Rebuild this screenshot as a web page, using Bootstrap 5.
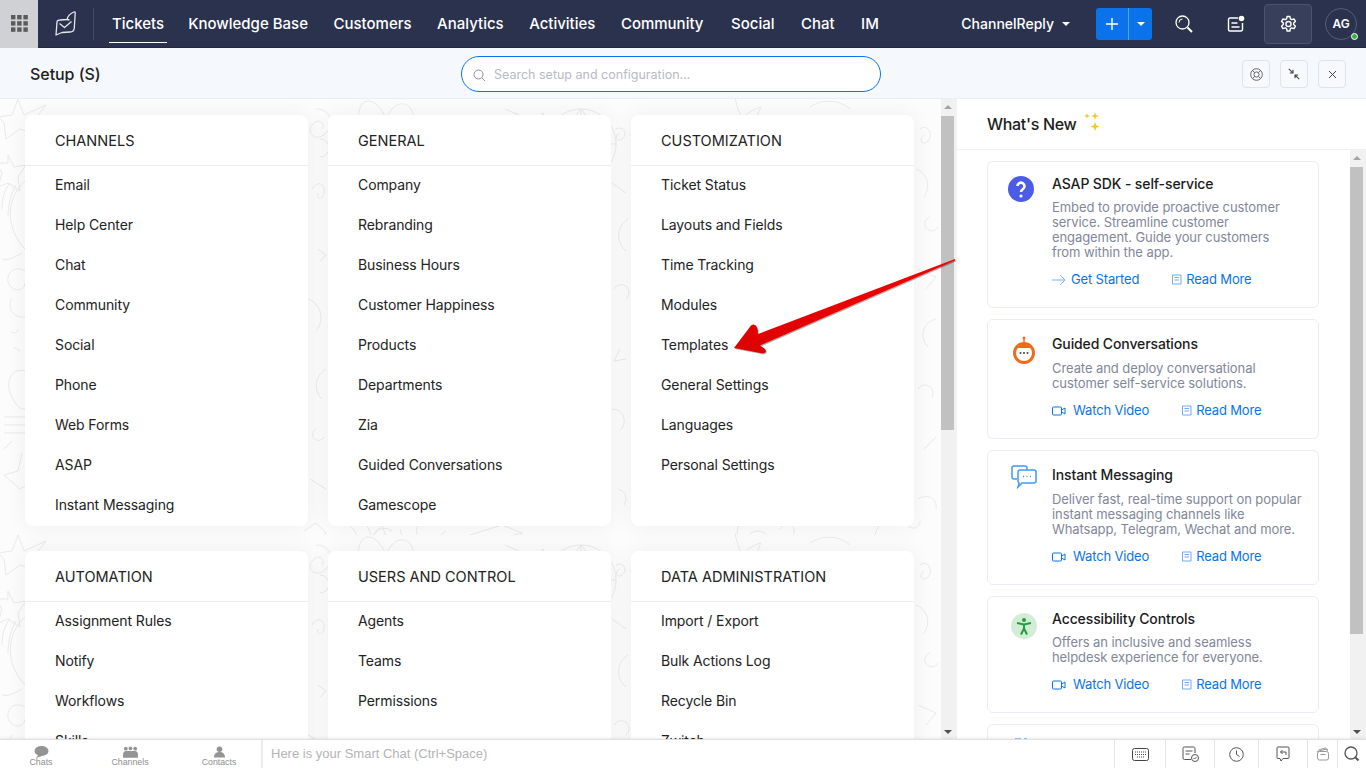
<!DOCTYPE html>
<html lang="en">
<head>
<meta charset="utf-8">
<title>Setup</title>
<link href="https://cdn.jsdelivr.net/npm/bootstrap@5.3.0/dist/css/bootstrap.min.css" rel="stylesheet">
<style>
html,body{height:100%;overflow:hidden}
body{font-family:Inter,"Noto Sans",sans-serif;font-size:14px;color:#1e1e1e;background:#fff}
.shell{height:768px}
.topbar{height:48px;background:#2b324d;color:#fff;border-bottom:1px solid #24293f}
.appgrid{width:38px;height:48px;background:#d0d1d5}
.logo-cell{width:56px;height:32px;border-right:1px solid #444b66}
.tabs{margin-left:15px;align-self:flex-start}
.tab-link{color:#fff;font-size:15px;font-weight:500;text-decoration:none;height:43px;line-height:47px;padding:0 3px;margin-right:19.5px}
.tab-link.on{border-bottom:1px solid #fff;margin-right:18px}
.tab-link.extra1{margin-right:20.5px}
.tab-link.extra2{margin-right:21.5px}
.tab-link:hover{color:#fff}
.dept{font-size:14px;font-weight:500;margin-right:26px}
.caret-d{width:0;height:0;border-left:4px solid transparent;border-right:4px solid transparent;border-top:4px solid #fff}
.addbtn{width:56px;height:32px;border-radius:3px;background:#0a73eb;margin-right:16px}
.addbtn>span:first-child{width:33px;border-right:1px solid #5da1f2;height:32px}
.addbtn>span:last-child{flex:1}
.top-ic{width:32px}
.top-ic+.top-ic{margin-left:20px}
.gear-box{width:48px;height:40px;border:1px solid #4c536d;background:#383f5a;border-radius:4px;margin:0 13px 0 12px}
.avatar-c{width:32px;height:32px;border:1px solid #555c76;border-radius:50%;font-size:12px;font-weight:600;margin-right:9px}
.avatar-c i{position:absolute;right:-2px;bottom:-1px;width:7px;height:7px;background:#2fb344;border:1px solid #fff;border-radius:50%}
.setupbar{height:51px;background:#f5f8fc;border-bottom:1px solid #e9eef4;padding:2px 20px 0 30px}
.setup-title{font-size:16px;font-weight:500;width:431px;letter-spacing:-.05px}
.searchbox{width:420px;height:36px;border:1px solid #0a73eb;border-radius:18px;background:#fff;padding:2px 0 0 11px;color:#b6bac4;font-size:12.5px;gap:8px}
.sq-btn{width:28px;height:28px;border:1px solid #dfe4ec;border-radius:4px;background:#f7f9fc;margin-left:10px}
.workarea{min-height:0;flex:1;position:relative}
.canvas{width:941px;padding:16px 0 0 25px;background-color:#fcfcfc;background-image:url("data:image/svg+xml,%3Csvg xmlns='http://www.w3.org/2000/svg' xmlns:xlink='http://www.w3.org/1999/xlink' width='941' height='436' fill='none' stroke='%23e9e9e9' stroke-width='1'%3E%3Cg id='t'%3E%3Cpath d='M18 0l6 16 22-10-14 18 6 12-18-6-14 10-2-16L-2 18l14-2z'/%3E%3Cpath d='M8 56l6 12 12-2-8 12 2 14-12-8-10 4 4-14-6-10 12 0z'/%3E%3Cpath d='M25 82C5 100 6 130 25 150M2 110c0-12 3-20 8-26M8 118c0-12 3-24 8-32'/%3E%3Cpath d='M2 160c8 2 16-4 20-6M25 172c-14-8-22 8-14 16 6 6 14 2 14-4M12 200c-6 8 2 20 13 18M10 232c4 4 8 2 8-2M14 248l6 4M25 272c-14-4-20 12-14 24s8 14 14 14'/%3E%3Cpath d='M4 318h21M4 326h21M4 334h21'/%3E%3Cpath d='M4 350l8-8M22 354l-4 18-14 4 16 14 10-6'/%3E%3Cpath d='M320 40a9 9 0 1 1 0 18M312 90c6-10 14-4 12 4s-8 6-6 0M318 150l8 6-6 6M308 200c12 4 18 20 8 32M326 270c-10 6-14 20-4 30M316 330a6 6 0 1 0 8 8M310 380l16 10'/%3E%3Cpath d='M616 30c8-4 12 6 6 10s-8-4-2-6M612 84l14 10M628 120c-10 6-14 22-2 32M614 190a8 8 0 1 1 12 10M620 250l-6 12 12-2M612 310c12 0 16 14 8 22M618 390c8 2 10 10 6 16'/%3E%3Cpath d='M920 30c8-6 14 6 8 12s-10-2-4-6M916 70c10 4 16 16 8 28M930 118a7 7 0 1 0 8 10M918 170l18 8-10 12M936 220c-12 2-18 18-8 28M918 290a8 8 0 1 1 14 8M924 350l12-12M918 400c10-6 20 0 18 10'/%3E%3Cpath d='M316 10c14 0 20 14 10 24s-20 0-14-8 14-2 10 4M360 34c-8-40 16-40 26-14 10-26 34-16 26 10M505 10l32 14 6-10 10 22M552 0'/%3E%3Cpath d='M581 10a35 35 0 1 0 .1 0zM546 45h70M581 10v70M581 10c-14 14-14 56 0 70M581 10c14 14 14 56 0 70'/%3E%3Cpath d='M640 16l6 12-16 8M735 -2c2 12 6 20 8 22 4-6 10-10 18-12-4 6-4 14-4 22M675 24c8 6 14 6 22 2M690 30l4-12 6 10'/%3E%3Cpath d='M810 8c12-8 28-8 40 2'/%3E%3C/g%3E%3Cg stroke-width='1'%3E%3Cpath d='M304 432l12-8 10 10-6 6M346 422c10 10 20 24 4 32M366 424l6 14 10-12 6 18M392 432a12 12 0 1 0 2 16M400 430c4 18 14 24 18 24s8-8 0-10M436 440l10-8M470 436l32-10 20 8v30l-32 6-20-8zM470 436l20 6 32-8M490 442v28M514 452a3 3 0 1 0 .1 0M524 452a3 3 0 1 0 .1 0M534 450a3 3 0 1 0 .1 0M700 440a14 14 0 1 0 .1 0M742 420c-8 10-6 30 6 38M758 432a12 12 0 1 0 .1 0M780 430c6-8 12-8 14 0s-8 14-4 20M850 444c6-6 14-4 14 4M884 420c-10 10-14 28-4 36M906 424c4 8 14 6 14-2'/%3E%3Cpath d='M316 440c-8 0-12 8-8 14M420 424c-6 6-4 16 4 16'/%3E%3C/g%3E%3Cuse xlink:href='%23t' y='436'/%3E%3C/svg%3E")}
.scroll-v{width:16px;background:#f1f1f1;position:relative;flex-shrink:0}
.scroll-v .thumb{position:absolute;left:0;right:3px;background:#c1c1c1;top:17px}
.thumb-left{height:314px}
.thumb-right{height:467px}
.scroll-v .up,.scroll-v .dn{position:absolute;left:3px;width:0;height:0;border-left:4px solid transparent;border-right:4px solid transparent}
.scroll-v .up{top:6px;border-bottom:4px solid #a3a3a3}
.scroll-v .dn{bottom:5px;border-top:4px solid #505050}
.panel-grid{display:grid;grid-template-columns:283px 283px 283px;column-gap:20px;row-gap:25px}
.menu-card{background:#fff;border-radius:8px 8px 0 0;padding-bottom:1px;box-shadow:0 0 22px rgba(0,0,0,.06)}
.menu-card.closed{border-radius:8px}
.menu-head{height:51px;line-height:51px;padding-left:30px;border-bottom:1px solid #e9ecf2;font-size:14.5px;color:#222;margin-bottom:-1px}
.menu-item{height:40px;line-height:40px;padding-left:30px;font-size:14px;color:#222;letter-spacing:-.1px}
.whatsnew{flex:1;background:#fff;min-width:0}
.wn-head{height:51px;border-bottom:1px solid #eceff3;padding-left:30px;font-size:16px;font-weight:500;color:#1c1c1c;letter-spacing:-.3px}
.spark{margin:0 0 5px 4px}
.wn-body{flex:1;min-height:0;overflow:hidden;position:relative}
.wn-list{flex:1;padding:11px 0 0 30px;gap:11px;min-width:0;overflow:hidden}
.wn-card{width:332px;border:1px solid #e8edf4;border-radius:6px;padding:12px 0 18px 20px;flex:none}
.wn-ic{width:44px;flex:none;padding-top:0}
.ic-q{margin-top:2px}
.ic-r{margin:2px 0 0 5px}
.ic-m{margin-left:3px}
.ic-a{margin:4px 0 0 3px}
.wn-title{font-size:14px;font-weight:500;color:#1b1b1b;line-height:20px;letter-spacing:-.12px}
.wn-desc{font-size:13px;line-height:15px;color:#81879a;margin-top:6px;width:251px;letter-spacing:-.08px}
.wn-card.roomy{padding-top:14px}
.wn-card.roomy .wn-desc{margin-top:7px}
.wn-acts{margin-top:10px;font-size:13px;line-height:19px;color:#0a73eb;gap:32px;letter-spacing:-.15px}
.wn-acts>span{gap:4px}
.wn-acts>span.gs{gap:5px}
.wn-acts>span.vid{gap:7px}
.stub-card{height:60px}
.bottombar{height:29px;background:#fff;border-top:1px solid #dfdfdf;box-shadow:0 -1px 3px rgba(0,0,0,.08);position:relative;z-index:2;flex:none}
.bb-tabs{width:261px;gap:7px}
.bb-tab{width:82px;font-size:8.8px;color:#8e8e8e;line-height:9px;padding-top:6px;font-family:"Liberation Sans",sans-serif}
.bb-chat{flex:1;border-left:2px solid #ececec;padding-left:8px;font-size:13px;color:#b4b4b4;height:28px;font-family:"Liberation Sans",sans-serif}
.bb-cell{height:28px;border-left:1px solid #e4e4e4}
.w51{width:51px}.w49{width:49px}.w44{width:44px}.w30{width:30px}.w29{width:29px}
.arrow-over{position:absolute;left:0;top:0;pointer-events:none;filter:drop-shadow(1px 1px .6px rgba(0,0,0,.3))}
</style>
</head>
<body>
<div class="shell d-flex flex-column">
  <header class="topbar d-flex align-items-center flex-shrink-0">
    <div class="appgrid d-flex align-items-center justify-content-center">
      <svg width="17" height="17" viewBox="0 0 17 17" fill="#5a5a5a"><rect x="0" y="0" width="4.400" height="4.400"/><rect x="6.200" y="0" width="4.400" height="4.400"/><rect x="12.400" y="0" width="4.400" height="4.400"/><rect x="0" y="6.200" width="4.400" height="4.400"/><rect x="6.200" y="6.200" width="4.400" height="4.400"/><rect x="12.400" y="6.200" width="4.400" height="4.400"/><rect x="0" y="12.400" width="4.400" height="4.400"/><rect x="6.200" y="12.400" width="4.400" height="4.400"/><rect x="12.400" y="12.400" width="4.400" height="4.400"/></svg>
    </div>
    <div class="logo-cell d-flex align-items-center justify-content-center">
      <svg width="21" height="25" viewBox="0 0 21 25" fill="none" stroke="#e6e8ee" stroke-width="1.300" stroke-linejoin="round"><path d="M1 24L2 11Q2.300 9 5 9L12 8.500Q13 3.500 19 1Q20.300 .6 20.200 2L19.300 17Q19 21 15 21L7 21.500Z"/><path d="M4.500 12.500L9.500 16.500L16.500 10.500"/><path d="M12 8.500L14.500 9"/></svg>
    </div>
    <nav class="tabs d-flex align-items-center">
      <a class="tab-link on">Tickets</a><a class="tab-link">Knowledge Base</a><a class="tab-link">Customers</a><a class="tab-link">Analytics</a><a class="tab-link">Activities</a><a class="tab-link extra2">Community</a><a class="tab-link extra1">Social</a><a class="tab-link extra1">Chat</a><a class="tab-link">IM</a>
    </nav>
    <div class="ms-auto d-flex align-items-center">
      <div class="dept d-flex align-items-center gap-2">ChannelReply <span class="caret-d"></span></div>
      <div class="addbtn d-flex align-items-center">
        <span class="d-flex align-items-center justify-content-center"><svg width="12" height="12" viewBox="0 0 12 12" stroke="#fff" stroke-width="1.400"><path d="M6 0v12M0 6h12"/></svg></span>
        <span class="d-flex align-items-center justify-content-center"><span class="caret-d"></span></span>
      </div>
      <span class="top-ic d-flex justify-content-center"><svg width="18" height="18" viewBox="0 0 18 18" fill="none" stroke="#fff" stroke-width="1.300"><circle cx="7.500" cy="7.500" r="6.500"/><path d="M12.500 12.500l4.500 4.500" stroke-width="2"/><path d="M4 7.500a3.500 3.500 0 0 1 3.500-3.500" stroke-width="1"/></svg></span>
      <span class="top-ic d-flex justify-content-center"><svg width="18" height="18" viewBox="0 0 18 18" fill="none" stroke="#fff" stroke-width="1.400"><path d="M11 3H3a1.500 1.500 0 0 0-1.500 1.500v10A1.500 1.500 0 0 0 3 16h11a1.500 1.500 0 0 0 1.500-1.500V8"/><path d="M4.500 8h6M4.500 12h8"/><circle cx="14.500" cy="3.500" r="2.800" fill="#fff" stroke="none"/></svg></span>
      <span class="gear-box d-flex align-items-center justify-content-center"><svg width="17" height="18" viewBox="0 0 24 24" fill="none" stroke="#fff" stroke-width="2" stroke-linejoin="round"><circle cx="12" cy="12" r="3.600"/><path d="M10 1.500h4l.7 3.300 1.900 1.100 3.200-1 2 3.400-2.500 2.300v2.200l2.500 2.300-2 3.400-3.200-1-1.900 1.100-.7 3.300h-4l-.7-3.300-1.900-1.100-3.200 1-2-3.400 2.500-2.300v-2.200L2.200 8.300l2-3.400 3.200 1 1.900-1.100z"/></svg></span>
      <span class="avatar-c d-flex align-items-center justify-content-center position-relative">AG<i></i></span>
    </div>
  </header>

  <div class="setupbar d-flex align-items-center flex-shrink-0">
    <div class="setup-title">Setup (S)</div>
    <div class="searchbox d-flex align-items-center">
      <svg width="13" height="13" viewBox="0 0 13 13" fill="none" stroke="#8a8f9c"><circle cx="5.500" cy="5.500" r="4.500"/><path d="M9 9l3 3"/></svg>
      <span>Search setup and configuration...</span>
    </div>
    <div class="ms-auto d-flex">
      <span class="sq-btn d-flex align-items-center justify-content-center"><svg width="13" height="13" viewBox="0 0 13 13" fill="none" stroke="#666"><circle cx="6.500" cy="6.500" r="5.800"/><circle cx="6.500" cy="6.500" r="2.600"/><path d="M2.400 2.400l2.200 2.200M10.600 2.400L8.400 4.600M2.400 10.600l2.200-2.200M10.600 10.600L8.400 8.400"/></svg></span>
      <span class="sq-btn d-flex align-items-center justify-content-center"><svg width="12" height="12" viewBox="0 0 12 12" fill="none" stroke="#444" stroke-width="1.100"><path d="M.8.8l4 4M5 1.800V5H1.800M11.200 11.200l-4-4M7 10.200V7h3.200"/></svg></span>
      <span class="sq-btn d-flex align-items-center justify-content-center"><svg width="9" height="9" viewBox="0 0 9 9" stroke="#444" stroke-width="1"><path d="M1 1l7 7M8 1L1 8"/></svg></span>
    </div>
  </div>

  <main class="workarea d-flex">
    <div class="canvas overflow-hidden">
      <div class="panel-grid">
        <section class="menu-card closed"><div class="menu-head">CHANNELS</div><div class="menu-item">Email</div><div class="menu-item">Help Center</div><div class="menu-item">Chat</div><div class="menu-item">Community</div><div class="menu-item">Social</div><div class="menu-item">Phone</div><div class="menu-item">Web Forms</div><div class="menu-item">ASAP</div><div class="menu-item">Instant Messaging</div></section>
        <section class="menu-card closed"><div class="menu-head">GENERAL</div><div class="menu-item">Company</div><div class="menu-item">Rebranding</div><div class="menu-item">Business Hours</div><div class="menu-item">Customer Happiness</div><div class="menu-item">Products</div><div class="menu-item">Departments</div><div class="menu-item">Zia</div><div class="menu-item">Guided Conversations</div><div class="menu-item">Gamescope</div></section>
        <section class="menu-card closed"><div class="menu-head">CUSTOMIZATION</div><div class="menu-item">Ticket Status</div><div class="menu-item">Layouts and Fields</div><div class="menu-item">Time Tracking</div><div class="menu-item">Modules</div><div class="menu-item">Templates</div><div class="menu-item">General Settings</div><div class="menu-item">Languages</div><div class="menu-item">Personal Settings</div></section>
        <section class="menu-card"><div class="menu-head">AUTOMATION</div><div class="menu-item">Assignment Rules</div><div class="menu-item">Notify</div><div class="menu-item">Workflows</div><div class="menu-item">Skills</div></section>
        <section class="menu-card"><div class="menu-head">USERS AND CONTROL</div><div class="menu-item">Agents</div><div class="menu-item">Teams</div><div class="menu-item">Permissions</div></section>
        <section class="menu-card"><div class="menu-head">DATA ADMINISTRATION</div><div class="menu-item">Import / Export</div><div class="menu-item">Bulk Actions Log</div><div class="menu-item">Recycle Bin</div><div class="menu-item">Zwitch</div></section>
      </div>
    </div>
    <div class="scroll-v"><span class="up"></span><span class="thumb thumb-left"></span><span class="dn"></span></div>
    <aside class="whatsnew d-flex flex-column">
      <div class="wn-head d-flex align-items-center flex-shrink-0">What's New
        <svg class="spark" width="20" height="20" viewBox="0 0 20 20" fill="#f2c832"><path d="M14 0l1 3 3 1-3 1-1 3-1-3-3-1 3-1zM6 1l.7 2L9 4l-2.300.7L6 7l-.7-2.300L3 4l2.300-1zM14 10l1.200 3.300 3.300 1.200-3.300 1.200L14 19l-1.200-3.300-3.300-1.200 3.300-1.200z"/></svg>
      </div>
      <div class="wn-body d-flex">
        <div class="wn-list d-flex flex-column">
          <article class="wn-card d-flex">
            <div class="wn-ic"><svg class="ic-q" width="26" height="26" viewBox="0 0 26 26"><circle cx="13" cy="13" r="13" fill="#4c5be8"/><path d="M9.500 10a3.500 3.500 0 1 1 5.500 3c-1.400 1-2 1.600-2 3" fill="none" stroke="#fff" stroke-width="2.600"/><circle cx="13" cy="20" r="1.600" fill="#fff"/></svg></div>
            <div><div class="wn-title">ASAP SDK - self-service</div><div class="wn-desc">Embed to provide proactive customer service. Streamline customer engagement. Guide your customers<br>from within the app.</div>
            <div class="wn-acts d-flex"><span class="gs d-flex align-items-center"><svg width="14" height="12" viewBox="0 0 14 12" fill="none" stroke="#7db4f3"><path d="M0 6h13M8 1l5 5-5 5"/></svg>Get Started</span><span class="d-flex align-items-center"><svg width="11" height="11" viewBox="0 0 11 11" fill="none" stroke="#6eabf1"><path d="M1.500 1h8.500v9H1.500zM3.500 3.500h4.500M3.500 6h4.500"/></svg>Read More</span></div></div>
          </article>
          <article class="wn-card roomy d-flex">
            <div class="wn-ic"><svg class="ic-r" width="26" height="30" viewBox="0 0 26 30"><circle cx="11" cy="2" r="1.500" fill="#f26a1b"/><path d="M11 3v4" stroke="#f26a1b" stroke-width="1.500"/><circle cx="11" cy="17" r="9.500" fill="none" stroke="#f26a1b" stroke-width="3"/><path d="M3 12a9 9 0 0 1 16 0z" fill="#f26a1b"/><circle cx="7.500" cy="17" r="1" fill="#444"/><circle cx="11" cy="17" r="1" fill="#444"/><circle cx="14.500" cy="17" r="1" fill="#444"/></svg></div>
            <div><div class="wn-title">Guided Conversations</div><div class="wn-desc">Create and deploy conversational customer self-service solutions.</div>
            <div class="wn-acts d-flex"><span class="vid d-flex align-items-center"><svg width="14" height="10" viewBox="0 0 14 10" fill="none" stroke="#0a73eb"><rect x=".5" y="1" width="9" height="8" rx="1"/><path d="M9.500 4l3.500-2v6l-3.500-2"/></svg>Watch Video</span><span class="d-flex align-items-center"><svg width="11" height="11" viewBox="0 0 11 11" fill="none" stroke="#6eabf1"><path d="M1.500 1h8.500v9H1.500zM3.500 3.500h4.500M3.500 6h4.500"/></svg>Read More</span></div></div>
          </article>
          <article class="wn-card roomy d-flex">
            <div class="wn-ic"><svg class="ic-m" width="26" height="24" viewBox="0 0 26 24" fill="none" stroke="#3f9bf5" stroke-width="1.500"><path d="M6 14H3a2 2 0 0 1-2-2V3a2 2 0 0 1 2-2h11a2 2 0 0 1 2 2v2"/><path d="M9 5h14a2 2 0 0 1 2 2v9a2 2 0 0 1-2 2H11l-4 4 1-4a2 2 0 0 1-1-2V7a2 2 0 0 1 2-2z" fill="#fff"/><path d="M12 11.500h1M15.500 11.500h1M19 11.500h1"/></svg></div>
            <div><div class="wn-title">Instant Messaging</div><div class="wn-desc">Deliver fast, real-time support on popular instant messaging channels like Whatsapp, Telegram, Wechat and more.</div>
            <div class="wn-acts d-flex"><span class="vid d-flex align-items-center"><svg width="14" height="10" viewBox="0 0 14 10" fill="none" stroke="#0a73eb"><rect x=".5" y="1" width="9" height="8" rx="1"/><path d="M9.500 4l3.500-2v6l-3.500-2"/></svg>Watch Video</span><span class="d-flex align-items-center"><svg width="11" height="11" viewBox="0 0 11 11" fill="none" stroke="#6eabf1"><path d="M1.500 1h8.500v9H1.500zM3.500 3.500h4.500M3.500 6h4.500"/></svg>Read More</span></div></div>
          </article>
          <article class="wn-card d-flex">
            <div class="wn-ic"><svg class="ic-a" width="26" height="26" viewBox="0 0 26 26"><circle cx="13" cy="13" r="13" fill="#d3ecd6"/><circle cx="13" cy="7" r="2" fill="#1ea03a"/><path d="M6 10l7 1.500 7-1.500M13 11.500v4M13 15.500l-3 6M13 15.500l3 6" fill="none" stroke="#1ea03a" stroke-width="2"/></svg></div>
            <div><div class="wn-title">Accessibility Controls</div><div class="wn-desc">Offers an inclusive and seamless helpdesk experience for everyone.</div>
            <div class="wn-acts d-flex"><span class="vid d-flex align-items-center"><svg width="14" height="10" viewBox="0 0 14 10" fill="none" stroke="#0a73eb"><rect x=".5" y="1" width="9" height="8" rx="1"/><path d="M9.500 4l3.500-2v6l-3.500-2"/></svg>Watch Video</span><span class="d-flex align-items-center"><svg width="11" height="11" viewBox="0 0 11 11" fill="none" stroke="#6eabf1"><path d="M1.500 1h8.500v9H1.500zM3.500 3.500h4.500M3.500 6h4.500"/></svg>Read More</span></div></div>
          </article>
          <article class="wn-card stub-card d-flex"><div class="wn-ic"><svg width="26" height="24" viewBox="0 0 26 24" fill="none" stroke="#2f8ff0" stroke-width="1.200"><path d="M7 2h6M16 2h3"/></svg></div></article>
        </div>
        <div class="scroll-v"><span class="up"></span><span class="thumb thumb-right"></span><span class="dn"></span></div>
      </div>
    </aside>
    <svg class="arrow-over" width="960" height="300" viewBox="0 98 960 300">
      <defs><linearGradient id="ag" x1="0" y1="0" x2="0" y2="1"><stop offset="0" stop-color="#f40000"/><stop offset="1" stop-color="#dc0202"/></linearGradient></defs>
      <path d="M955 258L758 333Q758 329 757 326.500Q755 322 751 324.500L734 347L763 352.500Q768 351.500 764.500 347.500L760 344.500L955 259.500Z" fill="url(#ag)"/>
    </svg>
  </main>

  <footer class="bottombar d-flex align-items-stretch">
    <div class="bb-tabs d-flex">
    <div class="bb-tab text-center"><svg width="16" height="12" viewBox="0 0 16 12" fill="#949494" class="d-block mx-auto"><ellipse cx="8.500" cy="5" rx="7" ry="5"/><path d="M3 12l3-4 3 2z"/></svg>Chats</div>
    <div class="bb-tab text-center"><svg width="15" height="12" viewBox="0 0 16 12" fill="#949494" class="d-block mx-auto"><circle cx="3" cy="2.500" r="2"/><circle cx="8" cy="2" r="2"/><circle cx="13" cy="2.500" r="2"/><path d="M0 9c0-3 2-4 3-4h10c1 0 3 1 3 4v3H0z"/></svg>Channels</div>
    <div class="bb-tab text-center"><svg width="13" height="12" viewBox="0 0 14 12" fill="#949494" class="d-block mx-auto"><circle cx="7" cy="3" r="3"/><path d="M1 12c0-4 2-6 6-6s6 2 6 6z"/></svg>Contacts</div>
    </div>
    <div class="bb-chat d-flex align-items-center">Here is your Smart Chat (Ctrl+Space)</div>
    <div class="d-flex ms-auto">
      <span class="bb-cell w51 d-flex align-items-center justify-content-center"><svg width="17" height="13" viewBox="0 0 17 13" fill="none" stroke="#444"><rect x=".5" y=".5" width="16" height="12" rx="2"/><path d="M3 4h11M3 6.500h11M5 9h7" stroke-dasharray="1 1"/></svg></span>
      <span class="bb-cell w49 d-flex align-items-center justify-content-center"><svg width="17" height="16" viewBox="0 0 17 16" fill="none" stroke="#555"><path d="M9 13.500H2.500a1.500 1.500 0 0 1-1.500-1.500V2.500A1.500 1.500 0 0 1 2.500 1h9A1.500 1.500 0 0 1 13 2.500V7"/><path d="M3.500 5h7M3.500 8h4"/><circle cx="13" cy="12" r="3.500"/><path d="M11.500 12l1 1 2-2"/></svg></span>
      <span class="bb-cell w44 d-flex align-items-center justify-content-center"><svg width="15" height="15" viewBox="0 0 15 15" fill="none" stroke="#555"><circle cx="7.500" cy="7.500" r="6.800"/><path d="M7.500 3.500v4l3 2"/></svg></span>
      <span class="bb-cell w49 d-flex align-items-center justify-content-center"><svg width="14" height="16" viewBox="0 0 14 16" fill="none" stroke="#555"><path d="M4 12.500H2a1 1 0 0 1-1-1V2a1 1 0 0 1 1-1h10a1 1 0 0 1 1 1v9.500a1 1 0 0 1-1 1H7l-2 2.500z"/><path d="M10 6H4.500M6.500 4l-2 2 2 2M10 6v3"/></svg></span>
      <span class="bb-cell w30 d-flex align-items-center justify-content-center"><svg width="14" height="14" viewBox="0 0 14 14" fill="none" stroke="#999"><path d="M1 4.500l9.500-2.500 1 2"/><path d="M2.500 3l7-2 2.500 2"/><rect x="1.500" y="4.500" width="11" height="8.500" rx="2"/><path d="M4.500 7.500h5"/></svg></span>
      <span class="bb-cell w29 d-flex align-items-center justify-content-center"><svg width="16" height="16" viewBox="0 0 16 16" fill="none" stroke="#555" stroke-width="1.300"><circle cx="7" cy="7" r="6"/><path d="M11.500 11.500l3 3" stroke-width="2"/></svg></span>
    </div>
  </footer>
</div>
<script src="https://cdn.jsdelivr.net/npm/bootstrap@5.3.0/dist/js/bootstrap.bundle.min.js"></script>
</body>
</html>
